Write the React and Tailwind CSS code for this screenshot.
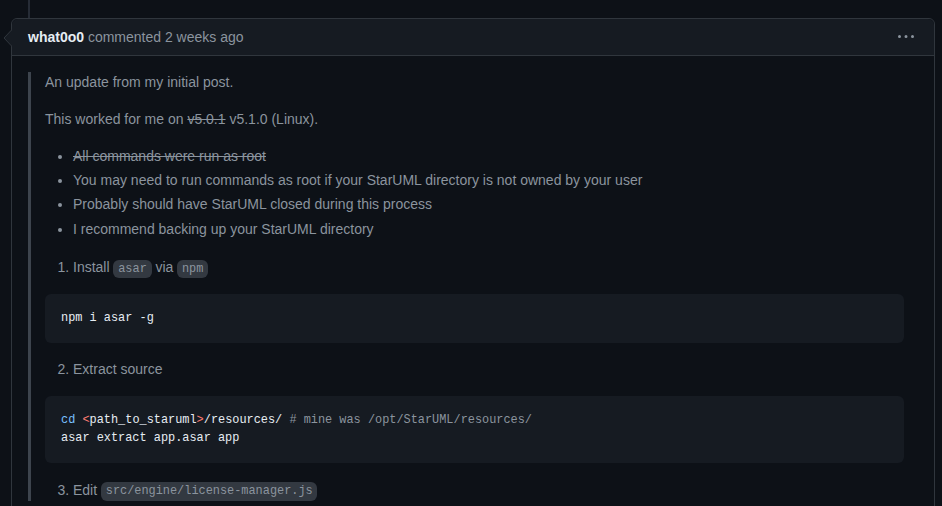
import React from "react";

const sans = { fontFamily: '"Liberation Sans", Arial, sans-serif' };
const mono = { fontFamily: '"Liberation Mono", "DejaVu Sans Mono", monospace' };

function Code({ children }) {
  return (
    <code
      style={mono}
      className="px-[0.4em] py-[0.2em] text-[11.9px] leading-none rounded-md bg-[rgba(110,118,129,0.4)] text-[#8b949e]"
    >
      {children}
    </code>
  );
}

export default function App() {
  return (
    <div style={sans} className="relative w-[942px] h-[506px] overflow-hidden bg-[#0d1117]">
      <div className="absolute left-[28px] top-0 h-[18px] w-[2px] bg-[#262c36]" />
      <div className="relative ml-[11px] mt-[18px] w-[924px] border border-[#30363d] rounded-md bg-[#0d1117]">
        <svg
          className="absolute left-[-9px] top-[10px]"
          width="9"
          height="18"
          viewBox="0 0 9 18"
        >
          <polygon points="9,0.5 1,9 9,17.5" fill="#161b22" />
          <polyline points="9,0.5 1,9 9,17.5" fill="none" stroke="#30363d" strokeWidth="1" />
        </svg>
        <div className="flex items-center justify-between h-[37px] pl-4 pr-[20px] bg-[#161b22] border-b border-[#30363d] rounded-t-md">
          <div className="text-[14px] leading-[21px]">
            <span className="font-bold text-[#e6edf3]">what0o0</span>
            <span className="text-[#8b949e]"> commented 2 weeks ago</span>
          </div>
          <svg width="16" height="16" viewBox="0 0 16 16" fill="#8b949e">
            <path d="M8 9a1.5 1.5 0 100-3 1.5 1.5 0 000 3zM1.5 9a1.5 1.5 0 100-3 1.5 1.5 0 000 3zm13 0a1.5 1.5 0 100-3 1.5 1.5 0 000 3z" />
          </svg>
        </div>
        <div className="p-4">
          <div className="border-l-[3.5px] border-[#3d444d] px-[14px] text-[#8b949e] text-[14px] leading-[21px]">
            <p className="mb-4">An update from my initial post.</p>
            <p className="mb-4">
              This worked for me on <del>v5.0.1</del> v5.1.0 (Linux).
            </p>
            <ul className="list-disc pl-[28px] mb-4">
              <li>
                <del>All commands were run as root</del>
              </li>
              <li className="mt-[3px]">
                You may need to run commands as root if your StarUML directory is not owned by your user
              </li>
              <li className="mt-[3px]">Probably should have StarUML closed during this process</li>
              <li className="mt-[4px]">I recommend backing up your StarUML directory</li>
            </ul>
            <ol className="list-decimal pl-[28px] mb-4">
              <li className="pt-[1px]">
                Install <Code>asar</Code> via <Code>npm</Code>
              </li>
            </ol>
            <pre
              style={mono}
              className="bg-[#161b22] rounded-md p-4 text-[11.9px] leading-[1.45] mb-4 text-[#e6edf3]"
            >
              npm i asar -g
            </pre>
            <ol start={2} className="list-decimal pl-[28px] mb-4">
              <li>Extract source</li>
            </ol>
            <pre
              style={mono}
              className="bg-[#161b22] rounded-md p-4 text-[11.9px] leading-[1.45] mb-4 text-[#e6edf3]"
            >
              <span className="text-[#79c0ff]">cd</span>{" "}
              <span className="text-[#ff7b72]">&lt;</span>path_to_staruml
              <span className="text-[#ff7b72]">&gt;</span>/resources/{" "}
              <span className="text-[#8b949e]"># mine was /opt/StarUML/resources/</span>
              {"\n"}asar extract app.asar app
            </pre>
            <ol start={3} className="list-decimal pl-[28px] mb-4">
              <li className="pt-[1px]">
                Edit <Code>src/engine/license-manager.js</Code>
              </li>
            </ol>
          </div>
        </div>
      </div>
    </div>
  );
}
